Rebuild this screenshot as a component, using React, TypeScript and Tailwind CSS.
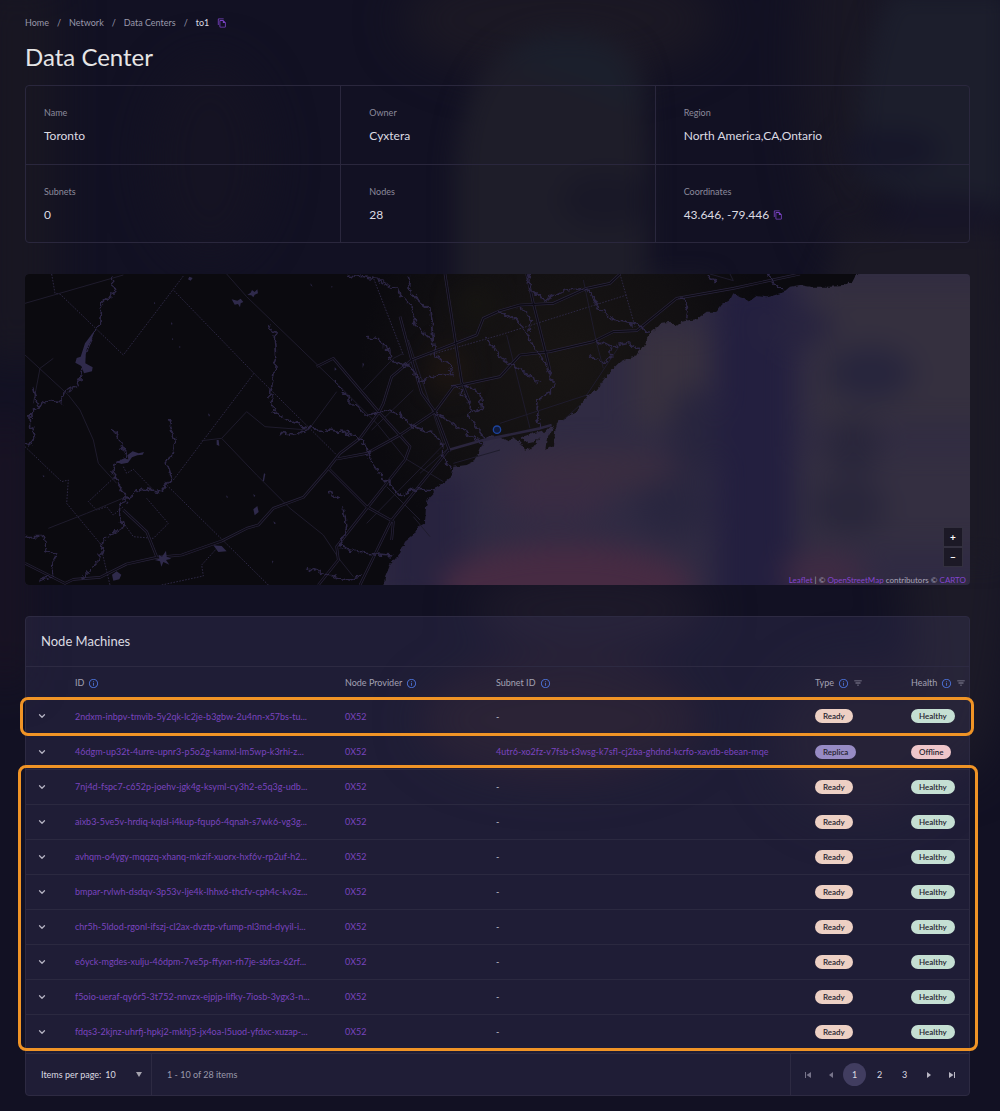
import type { ReactNode } from "react";
import { ChevronDown } from "lucide-react";
import { MdFilterList, MdInfoOutline, MdOutlineFileCopy } from "react-icons/md";

const crumbs = ["Home", "Network", "Data Centers"];

const details = [
  { label: "Name", value: "Toronto" },
  { label: "Owner", value: "Cyxtera" },
  { label: "Region", value: "North America,CA,Ontario" },
  { label: "Subnets", value: "0" },
  { label: "Nodes", value: "28" },
  { label: "Coordinates", value: "43.646, -79.446", copy: true },
];

const nodes = [
  { id: "2ndxm-inbpv-tmvib-5y2qk-lc2je-b3gbw-2u4nn-x57bs-tu..." },
  {
    id: "46dgm-up32t-4urre-upnr3-p5o2g-kamxl-lm5wp-k3rhi-z...",
    subnet: "4utr6-xo2fz-v7fsb-t3wsg-k7sfl-cj2ba-ghdnd-kcrfo-xavdb-ebean-mqe",
    type: "Replica",
    health: "Offline",
  },
  { id: "7nj4d-fspc7-c652p-joehv-jgk4g-ksyml-cy3h2-e5q3g-udb..." },
  { id: "aixb3-5ve5v-hrdiq-kqlsl-i4kup-fqup6-4qnah-s7wk6-vg3g..." },
  { id: "avhqm-o4ygy-mqqzq-xhanq-mkzif-xuorx-hxf6v-rp2uf-h2..." },
  { id: "bmpar-rvlwh-dsdqv-3p53v-lje4k-lhhx6-thcfv-cph4c-kv3z..." },
  { id: "chr5h-5ldod-rgonl-ifszj-cl2ax-dvztp-vfump-nl3md-dyyil-i..." },
  { id: "e6yck-mgdes-xulju-46dpm-7ve5p-ffyxn-rh7je-sbfca-62rf..." },
  { id: "f5oio-ueraf-qy6r5-3t752-nnvzx-ejpjp-lifky-7iosb-3ygx3-n..." },
  { id: "fdqs3-2kjnz-uhrfj-hpkj2-mkhj5-jx4oa-l5uod-yfdxc-xuzap-..." },
];

const badgeTints: Record<string, string> = {
  Ready: "bg-[#edd0c4]",
  Replica: "bg-[#978bc4]",
  Healthy: "bg-[#c5dfd3]",
  Offline: "bg-[#efc6ca]",
};

function Badge({ children }: { children: string }) {
  return (
    <span
      className={`inline-flex h-[14px] items-center rounded-full px-2 text-[8px] leading-none font-semibold text-[#25222d] ${badgeTints[children]}`}
    >
      {children}
    </span>
  );
}

function CopyButton({ label }: { label: string }) {
  return (
    <button type="button" aria-label={label} className="text-[#7a42c4]">
      <MdOutlineFileCopy className="size-[10px]" aria-hidden />
    </button>
  );
}

function HeaderCell({ children, filter }: { children: ReactNode; filter?: boolean }) {
  return (
    <th scope="col" className="p-0 text-left font-normal">
      <span className="flex items-center gap-1">
        {children}
        <MdInfoOutline className="size-[11px] text-[#4a6ed0]" aria-hidden />
        {filter && (
          <button type="button" aria-label={`Filter by ${children}`} className="text-[#8a879b]">
            <MdFilterList className="size-[10px]" aria-hidden />
          </button>
        )}
      </span>
    </th>
  );
}

function Backdrop() {
  return (
    <svg
      className="absolute inset-0 -z-10 h-full w-full"
      viewBox="0 0 1000 1111"
      preserveAspectRatio="none"
      aria-hidden
    >
      <defs>
        <filter id="soft" x="-30%" y="-30%" width="160%" height="160%" colorInterpolationFilters="sRGB">
          <feGaussianBlur stdDeviation="12" />
        </filter>
        <filter id="softer" x="-50%" y="-50%" width="200%" height="200%" colorInterpolationFilters="sRGB">
          <feGaussianBlur stdDeviation="22" />
        </filter>
      </defs>
      <rect width="1000" height="1111" fill="#121123" />
      <g filter="url(#softer)">
        <rect x="-20" y="-20" width="75" height="380" fill="#191722" />
        <rect x="-10" y="420" width="30" height="260" fill="#1d1423" />
        <ellipse cx="210" cy="160" rx="60" ry="100" fill="#151323" />
        <ellipse cx="560" cy="20" rx="160" ry="60" fill="#1b1824" />
        <ellipse cx="850" cy="60" rx="50" ry="200" fill="#191724" />
        <ellipse cx="960" cy="480" rx="60" ry="300" fill="#1c1a27" />
        <ellipse cx="590" cy="610" rx="120" ry="40" fill="#1d1929" />
        <ellipse cx="560" cy="720" rx="140" ry="60" fill="#201823" />
        <ellipse cx="860" cy="740" rx="90" ry="80" fill="#1a1725" />
      </g>
      <g filter="url(#soft)">
        <path d="M455 480V190C455 90 490 30 570 32S645 70 648 150V280H712V480Z" fill="#1e1d29" />
        <path d="M500 60C540 20 630 20 640 110L590 90Z" fill="#1b1f2c" />
        <path d="M1010 -10V210H950L860 180C850 110 870 30 890 -10Z" fill="#1c1e2c" />
        <path d="M845 230H1000V560H800V340Z" fill="#1b1925" />
        <ellipse cx="605" cy="200" rx="45" ry="28" fill="#191827" />
        <ellipse cx="890" cy="150" rx="50" ry="20" fill="#161629" />
        <ellipse cx="940" cy="215" rx="60" ry="20" fill="#161427" />
      </g>
    </svg>
  );
}

function LakeMap() {
  return (
    <svg
      className="absolute inset-0 h-full w-full"
      viewBox="75 42 2835 933"
      preserveAspectRatio="xMidYMid slice"
      role="img"
      aria-label="Map of the Toronto area"
    >
      <defs>
        <filter id="haze" x="-30%" y="-30%" width="160%" height="160%" colorInterpolationFilters="sRGB">
          <feGaussianBlur stdDeviation="42" />
        </filter>
        <filter id="wobble" x="-5%" y="-5%" width="110%" height="110%" colorInterpolationFilters="sRGB">
          <feTurbulence type="fractalNoise" baseFrequency="0.05" numOctaves="3" seed="4" result="noise" />
          <feDisplacementMap in="SourceGraphic" in2="noise" scale="26" xChannelSelector="R" yChannelSelector="G" />
        </filter>
        <filter id="shore" x="-2%" y="-2%" width="104%" height="104%" colorInterpolationFilters="sRGB">
          <feTurbulence type="fractalNoise" baseFrequency="0.08" numOctaves="2" seed="9" result="noise" />
          <feDisplacementMap in="SourceGraphic" in2="noise" scale="12" xChannelSelector="R" yChannelSelector="G" />
        </filter>
        <radialGradient id="town" gradientUnits="userSpaceOnUse" cx="1700" cy="320" r="620">
          <stop offset="0" stopColor="#181514" />
          <stop offset="0.6" stopColor="#121012" />
          <stop offset="1" stopColor="#0b0a0f" />
        </radialGradient>
      </defs>

      <rect x="0" y="0" width="3000" height="1020" fill="#302b43" />
      <g filter="url(#haze)">
        <rect x="1900" y="200" width="220" height="300" fill="#38313f" />
        <rect x="1150" y="640" width="250" height="400" fill="#28233f" />
        <ellipse cx="1700" cy="980" rx="380" ry="130" fill="#472b43" />
        <ellipse cx="1780" cy="630" rx="280" ry="60" fill="#3a2d40" />
        <ellipse cx="1660" cy="720" rx="170" ry="60" fill="#392b43" />
        <ellipse cx="2080" cy="520" rx="70" ry="140" fill="#28253e" />
        <ellipse cx="2020" cy="740" rx="110" ry="90" fill="#29263f" />
        <rect x="2150" y="60" width="230" height="1000" fill="#231f3f" />
        <rect x="2430" y="60" width="600" height="440" fill="#35303f" />
        <rect x="2410" y="560" width="620" height="300" fill="#342f41" />
        <ellipse cx="2470" cy="940" rx="130" ry="60" fill="#402b43" />
        <ellipse cx="2610" cy="340" rx="130" ry="80" fill="#27253d" />
        <ellipse cx="2560" cy="560" rx="80" ry="90" fill="#29263b" />
        <ellipse cx="2550" cy="740" rx="110" ry="80" fill="#29263b" />
        <ellipse cx="2380" cy="200" rx="120" ry="60" fill="#27233f" />
      </g>

      <path
        filter="url(#shore)"
        fill="url(#town)"
        d="M40 0V1020H1140L1156 950 1170 915 1200 880 1215 845 1240 825 1255 800 1275 790 1278 740 1285 715 1300 700 1310 680 1335 665 1355 650 1360 620 1400 615 1420 605 1440 570 1450 545 1470 525 1500 530 1520 542 1540 535 1560 545 1575 572 1600 560 1622 530 1605 545 1585 550 1562 532 1625 512 1632 520 1650 502 1662 497 1640 540 1636 570 1648 560 1662 560 1665 515 1675 480 1690 480 1700 470 1725 460 1740 435 1765 405 1790 390 1800 375 1825 340 1860 305 1875 298 1905 290 1915 272 1935 255 1945 225 1970 205 1985 188 2010 185 2030 198 2045 185 2070 180 2090 178 2120 155 2150 155 2165 135 2190 120 2200 100 2220 112 2250 122 2270 108 2300 112 2350 97 2370 80 2400 75 2430 80 2490 80 2530 78 2545 65 2555 70 2565 50 2590 30V0Z"
      />
      <g filter="url(#haze)" opacity="0.6">
        <ellipse cx="1340" cy="330" rx="50" ry="60" fill="#2b1d12" />
        <ellipse cx="1430" cy="130" rx="60" ry="50" fill="#1b1a12" />
      </g>

      <g fill="none" stroke="#2d2843" strokeWidth="3" strokeDasharray="5 4">
        <path d="M155 42 165 100 180 102 370 285 550 48M522 92 762 340 1010 585M762 340 520 660M75 560 185 665 205 660 200 730 300 850 330 975M500 675 805 975M340 655 265 725 290 750 320 740 340 765 370 740M370 620 380 640 400 628 460 690M440 715 505 790 460 835 400 830 375 795M485 975 610 948 605 915 655 860M1118 48 1210 285M1290 285 1500 225 1880 105M1860 42 1905 200" />
      </g>

      <g fill="none" stroke="#1f1c2d" strokeWidth="3">
        <path d="M75 130 370 45M75 285 205 405 240 450 280 540 295 610 350 670M680 42 740 110 1020 380 1130 490 1215 595 1330 665M100 430 120 325 160 295M605 542 665 535 740 455 795 500 925 510 1010 395M665 535 770 645 870 745 970 825 1020 900 1060 950M145 805 260 760 380 710M1090 390 1180 295 1210 280M1115 510 1240 390M1340 545 1100 790M1360 610 1500 570M1520 225 1590 505M1500 490 1760 405 1860 255M1750 60 1790 250 1810 325M1690 480 1740 435M2130 42 2200 62 2190 42" />
        <path d="M1225 240 1330 550M1240 770 1290 830M1160 680 1260 780M1260 640 1350 560" />
      </g>

      <g fill="none" stroke="#2a253d" strokeWidth="8" strokeLinejoin="round">
        <path d="M75 910 195 970 220 958 300 952 380 912 470 892 545 885 665 843 740 805 775 795 820 745 910 712 985 625 1020 580 1080 535 1135 460 1150 430 1175 350 1235 300 1300 275 1430 225 1450 175 1500 152 1560 135 1660 130 1760 85 1830 70 1860 42" />
        <path d="M985 625 1100 740 1180 785 1175 840M1010 597 1100 580 1200 525 1305 455 1360 380 1500 350 1560 285 1650 275 1780 245 1840 215 1910 212 2030 115 2200 85 2400 42M950 320 1000 295 1140 460 1230 560 1215 600 1010 860 1015 900 955 975M1345 570 1175 780 1080 975M1345 570 1450 540 1500 530 1620 505 1655 495M1200 170 1235 300 1265 400 1305 455 1350 575M1335 42 1385 365 1410 430M1580 42 1600 130 1650 330M370 750 440 815 470 890" />
      </g>
      <g fill="none" stroke="#0d0b14" strokeWidth="4" strokeLinejoin="round">
        <path d="M75 910 195 970 220 958 300 952 380 912 470 892 545 885 665 843 740 805 775 795 820 745 910 712 985 625 1020 580 1080 535 1135 460 1150 430 1175 350 1235 300 1300 275 1430 225 1450 175 1500 152 1560 135 1660 130 1760 85 1830 70 1860 42" />
        <path d="M985 625 1100 740 1180 785 1175 840M1010 597 1100 580 1200 525 1305 455 1360 380 1500 350 1560 285 1650 275 1780 245 1840 215 1910 212 2030 115 2200 85 2400 42M950 320 1000 295 1140 460 1230 560 1215 600 1010 860 1015 900 955 975M1345 570 1175 780 1080 975M1200 170 1235 300 1265 400 1305 455 1350 575M1335 42 1385 365 1410 430M1580 42 1600 130 1650 330M370 750 440 815 470 890" />
      </g>

      <g filter="url(#wobble)" fill="none" stroke="#2c2645" strokeWidth="5" strokeLinejoin="round">
        <path d="M335 42 342 100 305 130 303 180 285 215 255 280 245 350 230 375 195 395 185 425 150 422 115 440 92 460 95 500 105 530 90 555 75 550M115 440 100 380" />
        <path d="M340 510 365 560 385 590 345 610 340 650 380 710 355 750 370 800 310 840 300 900 245 955M505 480 525 540 520 580 498 600 515 655 480 695 425 685 380 715M75 830 130 830 135 870 170 885 150 920 160 945 115 965" />
        <path d="M805 190 825 220 830 290 812 400 825 465 925 505 1030 515 1090 540 1110 600 1160 665 1205 710 1250 685 1300 690M840 520 880 525 925 508M1005 365 1040 410 1100 470 1145 450 1200 460 1240 500 1290 515 1325 545 1325 590 1355 625" />
        <path d="M1040 45 1130 55 1200 100 1235 140 1245 195 1300 245 1305 285 1350 320 1360 350 1300 345 1260 365 1230 320 1170 300 1165 265 1130 235 1095 230M1225 50 1235 105 1290 150 1300 240M1360 375 1410 425 1405 470 1450 530M1390 375 1440 400 1445 445 1410 455M1310 460 1370 500 1450 550" />
        <path d="M1580 42 1590 90 1640 120 1700 90 1760 85 1800 150 1850 185 1925 200 1945 220M1500 155 1560 185 1590 240 1640 320 1665 380 1615 420 1610 460 1625 510M1560 140 1595 170 1590 210M1500 290 1550 320 1620 370M1460 230 1500 290M1770 290 1810 305 1835 290 1830 260 1790 240M1835 260 1880 250 1915 270M2040 110 2065 145 2060 175M2130 42 2150 70M2300 42 2335 85 2360 90" />
        <path d="M1030 745 1040 800 1020 860 1100 880 1180 885M920 925 980 945 1050 960 1085 950M990 700 1020 715" />
      </g>

      <g fill="#2f2a4b">
        <path d="M285 210 272 245 258 270 256 310 278 322 276 334 252 340 244 318 226 308 230 294 242 290 255 250Z" />
        <path d="M350 606 372 596 385 598 382 586 398 574 416 580 432 576 428 584 412 586 396 592 384 608 364 612Z" />
        <path d="M742 105 752 98 756 90 764 96 772 88 774 100 764 104 760 112 754 106ZM695 118 712 122 722 116 730 126 722 130 720 142 714 132 704 134Z" />
        <path d="M640 856 665 858 680 874 655 876ZM336 944 350 934 364 944 358 958 340 962ZM760 748 772 738 776 756 764 766ZM568 50 578 54 572 62 564 58Z" />
        <path d="M464 900 478 896 476 884 486 890 498 872 500 890 514 896 498 900 508 914 490 906 484 920 480 904ZM792 640 796 642 792 664 788 662ZM650 540 656 540 658 558 650 554Z" />
        <path d="M513 186l5 6-4 2zM462 126l4 4-4 2zM516 234l4 4-4 2zM538 258l4 3-4 3zM624 460l6 5-3 5zM678 706l6 5-3 3zM760 702l6 5-4 4zM820 784l8 6-5 2zM816 902l4 1-2 8zM1088 308l4 4-4 12zM1004 322l6 6-6 4zM932 70l6 10-6-4zM994 78l4 2-3 3zM128 646l6 2-4 4z" />
      </g>

      <circle cx="1491" cy="509" r="11" fill="#101b3c" stroke="#1d439c" strokeWidth="4" />
    </svg>
  );
}

const mapButton =
  "flex size-5 items-center justify-center border border-[#33303f] bg-[#1c1926] text-[10px] leading-none font-bold text-white";

const arrowButton = "flex h-[23px] w-[21px] items-center justify-center";
const pageButton = "flex size-[23px] items-center justify-center rounded-full";

export default function App() {
  return (
    <div className="relative isolate flow-root overflow-hidden bg-[#121123] pr-[30px] pb-[15px] pl-[25px] font-['Lato',sans-serif] text-[9px] text-[#dcdbe2]">
      <Backdrop />

      <nav aria-label="Breadcrumb" className="mt-4 flex h-[14px] items-center gap-2 text-[#9a99ab]">
        {crumbs.map((crumb) => (
          <span key={crumb} className="flex gap-2">
            <a href="#">{crumb}</a>
            <span>/</span>
          </span>
        ))}
        <span className="text-[#dcdbe2]">to1</span>
        <CopyButton label="Copy data center id" />
      </nav>

      <h1 className="mt-[11px] text-[24px] leading-8 text-[#e6e5e6]">Data Center</h1>

      <dl className="mt-3 grid grid-cols-3 overflow-hidden rounded border border-[#2a273d]">
        {details.map((item, idx) => (
          <div
            key={item.label}
            className={`h-[78px] border-[#2a273d] pt-5 ${idx % 3 ? "border-l pl-7" : "pl-[18px]"} ${idx > 2 ? "border-t" : ""}`}
          >
            <dt className="leading-[14px] text-[#8c8a9c]">{item.label}</dt>
            <dd className="mt-2 flex items-center gap-1 text-[12px] leading-4">
              {item.value}
              {item.copy && <CopyButton label="Copy coordinates" />}
            </dd>
          </div>
        ))}
      </dl>

      <section aria-label="Location" className="relative mt-[31px] h-[311px] overflow-hidden rounded-sm">
        <LakeMap />
        <div className="absolute right-[7px] bottom-[18px] flex flex-col">
          <button type="button" aria-label="Zoom in" className={mapButton}>
            +
          </button>
          <button type="button" aria-label="Zoom out" className={mapButton}>
            −
          </button>
        </div>
        <p className="absolute right-1 bottom-0 text-[8px] leading-[10px] text-[#aaa6b8]">
          <a href="#" className="text-[#8445cf]">Leaflet</a> | ©{" "}
          <a href="#" className="text-[#8445cf]">OpenStreetMap</a> contributors ©{" "}
          <a href="#" className="text-[#8445cf]">CARTO</a>
        </p>
      </section>

      <section className="mt-[31px] rounded border border-[#2d2a42] bg-[#8c82d2]/11">
        <h2 className="flex h-[50px] items-center border-b border-[#2d2a42] px-[15px] text-[13px] text-[#dcdbe2]">
          Node Machines
        </h2>

        <div className="relative pb-1">
          <table className="w-full table-fixed border-collapse">
            <colgroup>
              <col className="w-[49px]" />
              <col className="w-[270px]" />
              <col className="w-[151px]" />
              <col />
              <col className="w-[96px]" />
              <col className="w-[58px]" />
            </colgroup>
            <thead>
              <tr className="h-8 text-[#a3a1b3]">
                <th aria-label="Expand" />
                <HeaderCell>ID</HeaderCell>
                <HeaderCell>Node Provider</HeaderCell>
                <HeaderCell>Subnet ID</HeaderCell>
                <HeaderCell filter>Type</HeaderCell>
                <HeaderCell filter>Health</HeaderCell>
              </tr>
            </thead>
            <tbody>
              {nodes.map((node) => (
                <tr key={node.id} className="h-[35px] border-b border-[#2b2940] text-[#7a44bf] last:border-0">
                  <td className="p-0 pl-[11px]">
                    <button type="button" aria-label="Expand row" className="block text-[#b4b2c2]">
                      <ChevronDown className="size-[10px]" strokeWidth={3} aria-hidden />
                    </button>
                  </td>
                  <td className="p-0 whitespace-nowrap">
                    <a href="#">{node.id}</a>
                  </td>
                  <td className="p-0">
                    <a href="#">0X52</a>
                  </td>
                  <td className="p-0 whitespace-nowrap">
                    {node.subnet ? <a href="#">{node.subnet}</a> : <span className="text-[#c6c4d0]">-</span>}
                  </td>
                  <td className="p-0">
                    <Badge>{node.type ?? "Ready"}</Badge>
                  </td>
                  <td className="p-0">
                    <Badge>{node.health ?? "Healthy"}</Badge>
                  </td>
                </tr>
              ))}
            </tbody>
          </table>
          <div className="pointer-events-none absolute top-[30px] -right-[5px] -left-[6px] h-[39px] rounded-lg border-[3px] border-[#f09426]" />
          <div className="pointer-events-none absolute top-[98px] -right-[9px] -left-[8px] h-[286px] rounded-lg border-[3px] border-[#f09426]" />
        </div>

        <div className="flex h-[42px] items-stretch border-t border-[#2d2a42]">
          <div className="flex w-[126px] items-center border-r border-[#2d2a42] pl-[15px]">
            <label htmlFor="page-size">Items per page:</label>
            <span className="relative ml-1 flex flex-1 items-center">
              <select id="page-size" className="w-full appearance-none bg-transparent">
                <option>10</option>
              </select>
              <svg viewBox="0 0 6 5" className="pointer-events-none absolute right-[9px] h-[5px] w-[6px] fill-[#a5a3ae]" aria-hidden>
                <path d="M0 0h6L3 5z" />
              </svg>
            </span>
          </div>
          <p className="flex flex-1 items-center pl-[15px] text-[#9a99ab]">1 - 10 of 28 items</p>
          <div className="flex items-center gap-[2px] border-l border-[#2d2a42] pr-[7px] pl-[6px]">
            <button type="button" aria-label="First page" className={`${arrowButton} text-[#77748a]`}>
              <svg viewBox="0 0 6 6" className="size-[6px] fill-current" aria-hidden>
                <path d="M0 0h1v6H0zM6 0v6L1.500 3z" />
              </svg>
            </button>
            <button type="button" aria-label="Previous page" className={`${arrowButton} text-[#77748a]`}>
              <svg viewBox="0 0 6 6" className="size-[6px] fill-current" aria-hidden>
                <path d="M5 0v6L1 3z" />
              </svg>
            </button>
            <button type="button" aria-current="page" className={`${pageButton} bg-[#413d60]`}>
              1
            </button>
            <button type="button" className={pageButton}>
              2
            </button>
            <button type="button" className={pageButton}>
              3
            </button>
            <button type="button" aria-label="Next page" className={`${arrowButton} text-[#b9b7c4]`}>
              <svg viewBox="0 0 6 6" className="size-[6px] fill-current" aria-hidden>
                <path d="M1 0v6l4-3z" />
              </svg>
            </button>
            <button type="button" aria-label="Last page" className={`${arrowButton} text-[#b9b7c4]`}>
              <svg viewBox="0 0 6 6" className="size-[6px] fill-current" aria-hidden>
                <path d="M0 0v6l4.500-3zM5 0h1v6H5z" />
              </svg>
            </button>
          </div>
        </div>
      </section>
    </div>
  );
}
